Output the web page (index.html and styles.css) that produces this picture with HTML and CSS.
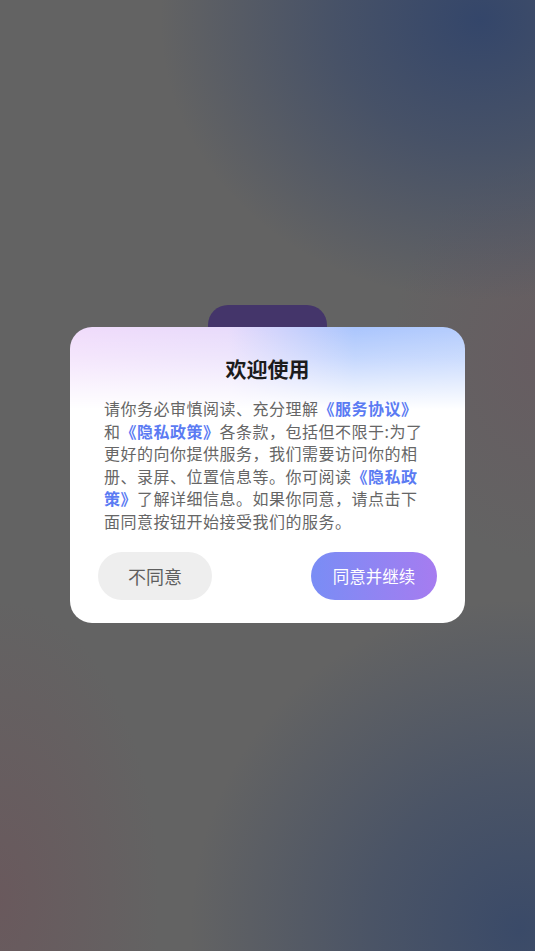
FILE: index.html
```html
<!DOCTYPE html>
<html lang="zh">
<head>
<meta charset="utf-8">
<title>欢迎使用</title>
<link rel="stylesheet" href="styles.css">
</head>
<body>
<div class="screen">
  <div class="backdrop">
    <div class="app-tile"></div>
  </div>
  <div class="overlay">
    <div class="dialog">
      <h1 class="title">欢迎使用</h1>
      <p class="body">请你务必审慎阅读、充分理解<a class="link">《服务协议》</a>和<a class="link">《隐私政策》</a>各条款，包括但不限于:为了更好的向你提供服务，我们需要访问你的相册、录屏、位置信息等。你可阅读<a class="link">《隐私政策》</a>了解详细信息。如果你同意，请点击下面同意按钮开始接受我们的服务。</p>
      <div class="actions">
        <button class="btn btn-decline">不同意</button>
        <button class="btn btn-accept">同意并继续</button>
      </div>
    </div>
  </div>
</div>
</body>
</html>
```
FILE: styles.css
```css
* { box-sizing: border-box; }
html, body { margin: 0; padding: 0; }
body {
  width: 535px;
  height: 951px;
  overflow: hidden;
  font-family: "Noto Sans CJK SC", "Noto Sans", sans-serif;
}
.screen {
  position: relative;
  width: 535px;
  height: 951px;
  background:
    radial-gradient(ellipse 320px 280px at 480px 20px, rgba(52,70,106,1) 0%, rgba(52,70,106,0.6) 45%, rgba(52,70,106,0) 100%),
    radial-gradient(ellipse 330px 330px at 520px 930px, rgba(58,74,104,1) 0%, rgba(58,74,104,0.6) 45%, rgba(58,74,104,0) 100%),
    radial-gradient(ellipse 160px 300px at 0px 900px, rgba(106,88,92,0.9) 0%, rgba(106,88,92,0) 100%),
    radial-gradient(ellipse 150px 200px at 540px 360px, rgba(104,90,96,0.7) 0%, rgba(104,90,96,0) 100%),
    #636363;
}
.backdrop {
  position: absolute;
  inset: 0;
}
.app-tile {
  position: absolute;
  left: 208px;
  top: 305px;
  width: 119px;
  height: 60px;
  border-radius: 20px;
  background: #44356a;
}
.overlay {
  position: absolute;
  inset: 0;
  display: flex;
  justify-content: center;
  padding-top: 327px;
}
.dialog {
  width: 395px;
  height: 296px;
  border-radius: 22px;
  background:
    linear-gradient(180deg, rgba(255,255,255,0) 0%, rgba(255,255,255,0.3) 30px, #ffffff 82px),
    linear-gradient(90deg, #f0dbfb 0%, #e8dbfb 40%, #aac5fd 72%, #b4ccfd 100%);
  padding: 26px 28px 23px;
  display: flex;
  flex-direction: column;
}
.title {
  margin: 0;
  text-align: center;
  font-size: 21px;
  line-height: 30px;
  font-weight: 700;
  color: #1c1c1c;
}
.body {
  margin: 14px 6px 0;
  font-size: 16px;
  letter-spacing: 0.5px;
  line-height: 22.6px;
  color: #666666;
}
.link {
  color: #5b7bf3;
  font-weight: 700;
}
.actions {
  margin-top: auto;
  display: flex;
  justify-content: space-between;
}
.btn {
  height: 48px;
  border: none;
  border-radius: 24px;
  font-family: inherit;
  padding: 0;
}
.btn-decline {
  width: 114px;
  background: #eeeeee;
  color: #5e5e5e;
  font-size: 18px;
}
.btn-accept {
  width: 126px;
  background: linear-gradient(90deg, #798df5 0%, #a67cf0 100%);
  color: #ffffff;
  font-size: 16.5px;
}
```
